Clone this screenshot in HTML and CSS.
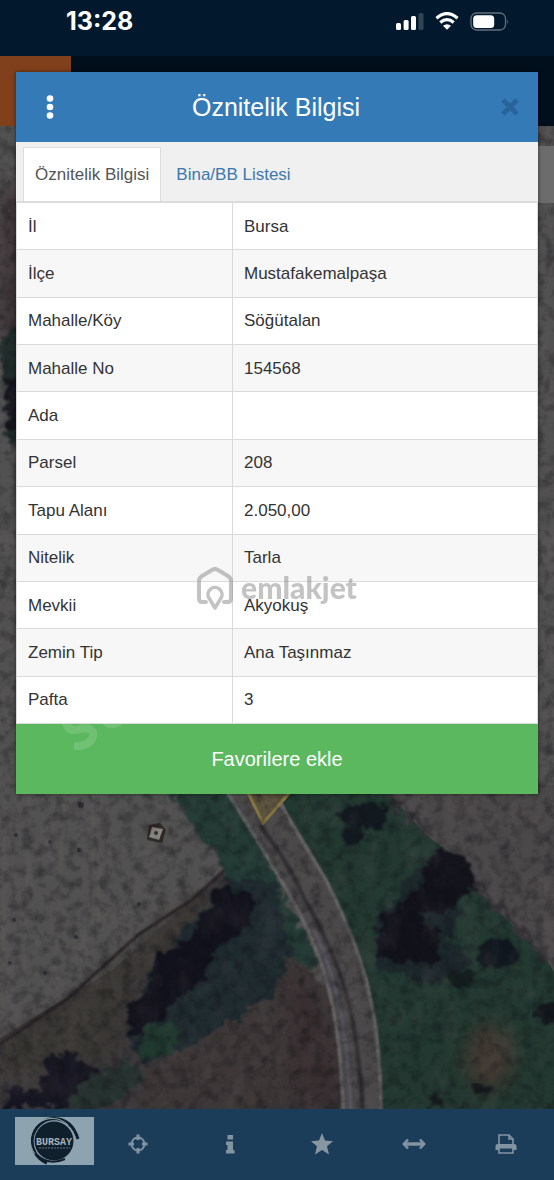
FILE: index.html
```html
<!DOCTYPE html>
<html lang="tr">
<head>
<meta charset="utf-8">
<meta name="viewport" content="width=device-width, initial-scale=1">
<title>Öznitelik Bilgisi</title>
<link rel="stylesheet" href="styles.css">
</head>
<body>
<div class="app">
  <header class="status">
    <time class="status-time">13:28</time>
    <div class="status-icons">
      <svg width="28" height="18" viewBox="0 0 28 18" fill="#fff" aria-hidden="true">
        <rect x="0" y="11" width="5" height="7" rx="1.5"/><rect x="7.600" y="8" width="5" height="10" rx="1.500"/><rect x="15" y="4" width="5" height="14" rx="1.500"/><rect x="22.500" y="1" width="5" height="17" rx="1.500" fill="#2f4456"/>
      </svg>
      <svg width="24" height="18" viewBox="0 0 24 18" fill="none" stroke="#fff" stroke-width="3.200" aria-hidden="true">
        <path d="M1.500 6.200Q12-3 22.500 6.200M5.300 10.500Q12 4.700 18.700 10.500"/><path d="M8 13.800Q12 10.500 16 13.800L12 17.800Z" fill="#fff" stroke="none"/>
      </svg>
      <svg width="40" height="19" viewBox="0 0 40 19" aria-hidden="true">
        <rect x="1" y="1" width="34.500" height="17" rx="5.500" fill="none" stroke="#63707c" stroke-width="1.300"/><rect x="3.200" y="3.200" width="21" height="12.800" rx="3.500" fill="#fff"/><path d="M37.300 7q1.800 2.500 0 5z" fill="#63707c"/>
      </svg>
    </div>
  </header>
  <div class="brand-bar"><div class="brand-mark"></div></div>
  <main class="map">
    <svg class="map-art" viewBox="0 126 554 983" preserveAspectRatio="xMidYMid slice" aria-hidden="true">
      <defs>
        <filter id="grain" x="0" y="0" width="100%" height="100%" color-interpolation-filters="sRGB">
          <feTurbulence type="fractalNoise" baseFrequency="0.090" numOctaves="4" seed="4"/>
          <feColorMatrix values="0 0 0 0 .05  0 0 0 0 .05  0 0 0 0 .07  1.600 0 0 0 -0.680"/>
        </filter>
        <filter id="light" x="0" y="0" width="100%" height="100%" color-interpolation-filters="sRGB">
          <feTurbulence type="fractalNoise" baseFrequency="0.050 0.030" numOctaves="4" seed="12"/>
          <feColorMatrix values="0 0 0 0 .5  0 0 0 0 .46  0 0 0 0 .46  1.300 0 0 0 -0.600"/>
        </filter>
        <filter id="rough" x="-10%" y="-10%" width="120%" height="120%" color-interpolation-filters="sRGB">
          <feTurbulence type="fractalNoise" baseFrequency="0.090" numOctaves="3" seed="7" result="n"/>
          <feDisplacementMap in="SourceGraphic" in2="n" scale="20" xChannelSelector="R" yChannelSelector="G"/>
          <feGaussianBlur stdDeviation="1.200"/>
        </filter>
        <filter id="soft" color-interpolation-filters="sRGB"><feGaussianBlur stdDeviation="0.800"/></filter>
        <filter id="haze" x="-20%" y="-20%" width="140%" height="140%" color-interpolation-filters="sRGB"><feGaussianBlur stdDeviation="9"/></filter>
      </defs>
      <rect y="126" width="554" height="983" fill="#525151"/>
      <rect x="0" y="190" width="22" height="150" fill="#3a3033" filter="url(#haze)"/>
      <path d="M0 335L22 320V460L8 440Z" fill="#202d2b" filter="url(#rough)"/>
      <path d="M5 380H22V440L8 425Z" fill="#15141e" filter="url(#rough)"/>
      <path d="M160 785H240L345 1109H0V1038L115 968L228 867Z" fill="#3a3739"/>
      <path d="M60 1010L205 890L215 930L130 985L110 1060L0 1080V1040Z" fill="#3a3834" filter="url(#haze)"/>
      <path d="M155 785L180 810L225 867L240 850L195 785Z" fill="#555253" filter="url(#rough)"/>
      <path d="M228 867L190 901L138 935L66 1000L0 1044" fill="none" stroke="#241f21" stroke-width="3" filter="url(#soft)"/>
      <path d="M168 785H232L320 965L285 985L232 885L212 850L197 835Z" fill="#243b35" filter="url(#rough)"/>
      <path d="M232 878L275 880L290 955L275 995L200 1040L145 1064L128 1035L150 970L190 925Z" fill="#1f2b2f" filter="url(#rough)"/>
      <path d="M218 888L252 893L248 928L212 950L207 980L170 1003L150 1042L128 1036L130 1002L150 990L153 960L190 937Z" fill="#12121c" filter="url(#rough)"/>
      <path d="M155 1020L180 1030L175 1055L142 1060L138 1040Z" fill="#20392f" filter="url(#rough)"/>
      <path d="M270 1000L290 955L345 1000V1109H135L150 1070Z" fill="#3d3737" filter="url(#rough)"/>
      <path d="M290 970L318 995L343 1109H295Z" fill="#372e30" filter="url(#haze)"/>
      <path d="M48 1060L70 1050L97 1070L92 1100L60 1109H0L15 1085L38 1092Z" fill="#161622" filter="url(#rough)"/>
      <path d="M80 1083L130 1059L140 1080L110 1109H60Z" fill="#26322f" filter="url(#rough)"/>
      <path d="M275 785H390L480 852L554 972V1109H370L368 1000L320 885Z" fill="#223830"/>
      <path d="M412 875L450 855L466 890L448 940L475 965L435 982L375 970L375 925Z" fill="#1c272b" filter="url(#rough)"/>
      <path d="M415 890L430 868L475 875L455 910L415 915L440 930L435 965L376 958L380 925Z" fill="#12121b" filter="url(#rough)"/>
      <ellipse cx="364" cy="816" rx="25" ry="13" fill="#121a20" filter="url(#rough)"/>
      <ellipse cx="352" cy="834" rx="10" ry="11" fill="#121a20" filter="url(#rough)"/>
      <ellipse cx="498" cy="953" rx="20" ry="16" fill="#121920" filter="url(#rough)"/>
      <ellipse cx="462" cy="979" rx="14" ry="9" fill="#151f1e" filter="url(#rough)"/>
      <ellipse cx="549" cy="1014" rx="14" ry="11" fill="#13181e" filter="url(#rough)"/>
      <ellipse cx="489" cy="1058" rx="25" ry="34" fill="#403932" filter="url(#haze)"/>
      <path d="M470 1086h22v7h-22zM425 1103l12-10 8 16z" fill="#171a1c" filter="url(#rough)"/>
      <path d="M382 785H554V965L507 920L475 887L459 860L425 834Z" fill="#4b4849"/>
      <path d="M385 790L425 834M476 884L550 961" fill="none" stroke="#373438" stroke-width="7" filter="url(#rough)"/>
      <path d="M425 865L440 845L473 865L476 888L440 890Z" fill="#14141d" filter="url(#rough)"/>
      <path d="M224 785Q256 838 281 880C320 945 341 1000 343 1115H382C381 1010 364 955 326 880L270 785Z" fill="#4a4848" filter="url(#soft)"/>
      <path d="M226 790Q256 838 281 880C320 945 341 1000 343 1115M272 790L326 880C364 955 381 1010 381 1115" fill="none" stroke="#6d6a6b" stroke-width="3" filter="url(#soft)"/>
      <path d="M260 825Q290 865 304 898C340 960 358 1010 363 1115" fill="none" stroke="#302d31" stroke-width="4" filter="url(#soft)"/>
      <path d="M314 930C340 985 348 1040 351 1115" fill="none" stroke="#585663" stroke-width="3" filter="url(#soft)"/>
      <path d="M244 785L263 823L292 790" fill="#5b533d" stroke="#867640" stroke-width="3"/>
      <path d="M149 825L160 823L166 830L162 843L147 840Z" fill="#2d2925"/>
      <path d="M152 827L163 829L159 840L149 837Z" fill="#898580"/><circle cx="156" cy="833" r="2" fill="#302d2b"/>
      <g fill="none" stroke="#68645f" stroke-width="2" opacity=".35" filter="url(#soft)"><path d="M30 790L24 980M65 790L55 970M93 790V930M102 790L98 925M5 800L2 1010"/></g>
      <g fill="#25242b" opacity=".7"><circle cx="81" cy="805" r="3"/><circle cx="16" cy="835" r="2"/><circle cx="50" cy="842" r="2"/><circle cx="79" cy="850" r="2"/><circle cx="14" cy="920" r="2"/><circle cx="45" cy="973" r="2"/><circle cx="76" cy="937" r="2"/><circle cx="10" cy="963" r="2"/><circle cx="139" cy="904" r="2"/></g>
      <rect y="126" width="554" height="983" filter="url(#grain)" opacity=".55"/>
      <rect y="126" width="554" height="983" filter="url(#light)" opacity=".25"/>
      <rect x="530" y="146" width="24" height="57" fill="#6c6c6c"/>
    </svg>
  </main>
  <nav class="toolbar" aria-label="Harita araçları">
    <a class="logo" href="#" aria-label="BURSAY">
      <svg width="79" height="48" viewBox="0 0 79 48">
        <circle cx="39" cy="24" r="19.500" fill="#101f2c"/>
        <path d="M32 46A23 23 0 0 1 39 1.500Q57 2 63 22" fill="none" stroke="#101f2c" stroke-width="3"/>
        <path d="M20 37A22 22 0 0 1 53 8M61 29Q57 42 43 46" fill="none" stroke="#91a5b1" stroke-width="1"/>
        <path d="M22 38Q34 49 50 42" fill="none" stroke="#101f2c" stroke-width="2"/>
        <text class="logo-text" x="39" y="28" text-anchor="middle">BURSAY</text>
        <path d="M24 31H55" stroke="#657682" stroke-width="1" stroke-dasharray="2 1"/>
      </svg>
    </a>
    <div class="tools">
      <button class="tool" aria-label="Konum"><svg width="20" height="20" viewBox="0 0 20 20" fill="none" stroke="#8294a2" stroke-width="1.800"><circle cx="10" cy="10" r="6.500"/><path d="M10 .5V6M10 14V19.500M.5 10H6M14 10H19.500" stroke-width="3"/></svg></button>
      <button class="tool" aria-label="Bilgi"><svg width="20" height="20" viewBox="0 0 20 20" fill="#8294a2"><path d="M7.500 1H13V5.500H7.500ZM6 7.500H13V16H14.500V19.500H6V16H7.500V11H6Z"/></svg></button>
      <button class="tool" aria-label="Favoriler"><svg width="22" height="22" viewBox="0 0 22 22" fill="#8796a0"><path d="M11 0L14 7.600L22 8.200L16 13.200L18 21.500L11 17L4 21.500L6 13.200L0 8.200L8 7.600Z"/></svg></button>
      <button class="tool" aria-label="Ölçüm"><svg width="24" height="12" viewBox="0 0 24 12" fill="none" stroke="#8294a2"><path d="M2 6H22" stroke-width="3.500"/><path d="M6 1.500L1.800 6L6 10.500M18 1.500L22.200 6L18 10.500" stroke-width="2.500"/></svg></button>
      <button class="tool" aria-label="Yazdır"><svg width="22" height="20" viewBox="0 0 22 20"><path d="M4 11V1H14L18 5V11M14 1V5H18" fill="none" stroke="#8294a2" stroke-width="1.600"/><path d="M3 10H19Q21.500 10 21.500 12V16H18V14.500H4V16H.5V12Q.5 10 3 10Z" fill="#8294a2"/><path d="M4 14V19H18V14" fill="none" stroke="#8294a2" stroke-width="1.600"/></svg></button>
    </div>
  </nav>

  <section class="dialog" role="dialog" aria-labelledby="dialog-title">
    <header class="dialog-head">
      <button class="head-button" aria-label="Menü"><svg width="8" height="24" viewBox="0 0 8 24" fill="#fff"><circle cx="4" cy="3.500" r="3.300"/><circle cx="4" cy="12" r="3.300"/><circle cx="4" cy="20.500" r="3.300"/></svg></button>
      <h1 class="dialog-title" id="dialog-title">Öznitelik Bilgisi</h1>
      <button class="head-button head-close" aria-label="Kapat"><svg width="18" height="18" viewBox="0 0 18 18" fill="none" stroke="#28649a" stroke-width="5"><path d="M2 2L16 16M16 2L2 16"/></svg></button>
    </header>
    <div class="tabs">
      <a class="tab tab-active" href="#bilgi">Öznitelik Bilgisi</a>
      <a class="tab" href="#liste">Bina/BB Listesi</a>
    </div>
    <table class="details" id="bilgi">
      <tbody>
        <tr><th scope="row">İl</th><td>Bursa</td></tr>
        <tr><th scope="row">İlçe</th><td>Mustafakemalpaşa</td></tr>
        <tr><th scope="row">Mahalle/Köy</th><td>Söğütalan</td></tr>
        <tr><th scope="row">Mahalle No</th><td>154568</td></tr>
        <tr><th scope="row">Ada</th><td></td></tr>
        <tr><th scope="row">Parsel</th><td>208</td></tr>
        <tr><th scope="row">Tapu Alanı</th><td>2.050,00</td></tr>
        <tr><th scope="row">Nitelik</th><td>Tarla</td></tr>
        <tr><th scope="row">Mevkii</th><td>Akyokuş</td></tr>
        <tr><th scope="row">Zemin Tip</th><td>Ana Taşınmaz</td></tr>
        <tr><th scope="row">Pafta</th><td>3</td></tr>
      </tbody>
    </table>
    <button class="favorite">Favorilere ekle
      <svg class="faint-mark" width="70" height="30" viewBox="0 0 70 30" fill="none" stroke="#fff" stroke-width="8" aria-hidden="true"><path d="M4-2Q6 9 18 5Q32 2 31 12Q28 23 12 22"/><path d="M42-4Q48 3 58-2"/></svg>
    </button>
  </section>
  <div class="watermark" aria-hidden="true">
    <svg width="36" height="44" viewBox="0 0 36 44" fill="none" stroke="#888" stroke-width="4" stroke-linejoin="round" stroke-linecap="round">
      <path d="M9 35H5Q2 35 2 31V14Q2 11 5 9L15 3Q18 1 21 3L31 9Q34 11 34 14V31Q34 35 31 35H27"/><path d="M18 41L12 31A7 7 0 1 1 24 31Z" stroke-width="3.500"/>
    </svg>
    <span>emlakjet</span>
  </div>
</div>
</body>
</html>
```
FILE: styles.css
```css
* { box-sizing: border-box; }

body {
  margin: 0;
  font-family: "Liberation Sans", Arial, sans-serif;
  color: #333;
}

button {
  margin: 0;
  padding: 0;
  border: 0;
  background: none;
  font: inherit;
  cursor: pointer;
}

svg { display: block; }

.app {
  position: relative;
  display: flex;
  flex-direction: column;
  min-height: 100vh;
}

.status {
  display: flex;
  justify-content: space-between;
  align-items: center;
  height: 56px;
  padding: 0 44px 14px 66px;
  background: #02182d;
}

.status-time {
  font: 700 25px/28px Inter, sans-serif;
  color: #fff;
}

.status-icons {
  display: flex;
  align-items: center;
  gap: 11px;
}

.brand-bar {
  height: 70px;
  background: #010f1c;
}

.brand-mark {
  width: 71px;
  height: 100%;
  background: #80401c;
}

.map {
  position: relative;
  flex: 1;
  overflow: hidden;
  background: #4d4c4d;
}

.map-art {
  position: absolute;
  inset: 0;
  width: 100%;
  height: 100%;
}

.toolbar {
  display: flex;
  align-items: center;
  height: 71px;
  padding: 0 0 8px 15px;
  background: #1c3d5a;
}

.logo { background: #8ea3b0; }

.logo-text {
  font: 700 10px "Liberation Mono", monospace;
  fill: #a5b2bb;
}

.tools {
  display: grid;
  flex: 1;
  grid-template-columns: repeat(5, 1fr);
}

.tool {
  display: grid;
  place-items: center;
  height: 48px;
  padding: 7px 5px 0 0;
}

.dialog {
  position: absolute;
  top: 72px;
  left: 16px;
  right: 16px;
  background: #fff;
  box-shadow: 0 0 4px rgba(0, 0, 0, 0.5);
}

.dialog-head {
  display: flex;
  align-items: center;
  height: 70px;
  padding: 0 4px 0 18px;
  background: #347ab7;
}

.head-button {
  display: grid;
  place-items: center;
  width: 32px;
  height: 48px;
}

.head-close { width: 48px; }

.dialog-title {
  flex: 1;
  margin: 0;
  font-size: 25px;
  font-weight: 400;
  line-height: 32px;
  text-align: center;
  color: #fff;
}

.tabs {
  display: flex;
  height: 60px;
  padding: 5px 7px 0;
  background: #f0f0f0;
  border-bottom: 1px solid #ddd;
}

.tab {
  padding: 0 14px;
  border: 1px solid transparent;
  border-bottom: 0;
  font-size: 17px;
  line-height: 54px;
  color: #3c78ab;
  text-decoration: none;
}

.tab-active {
  padding: 0 11px;
  background: #fff;
  border-color: #ddd;
  color: #555;
}

.details {
  width: 100%;
  height: 522px;
  border-collapse: collapse;
  table-layout: fixed;
  font-size: 17px;
  line-height: 24px;
}

.details th,
.details td {
  padding: 1px 11px 0;
  border: 1px solid #dadada;
  font-weight: 400;
  text-align: left;
}

.details th { width: 216px; }

.details tr:nth-child(even) { background: #f7f7f7; }

.favorite {
  position: relative;
  display: block;
  width: 100%;
  height: 70px;
  overflow: hidden;
  background: #5cb85f;
  font-size: 20px;
  color: #fff;
}

.faint-mark {
  position: absolute;
  top: 0;
  left: 46px;
  opacity: 0.13;
}

.watermark {
  position: absolute;
  top: 567px;
  left: 0;
  right: 0;
  display: flex;
  justify-content: center;
  gap: 8px;
  font: 900 30px/40px Lato, sans-serif;
  color: #888;
  opacity: 0.5;
  pointer-events: none;
}
```
